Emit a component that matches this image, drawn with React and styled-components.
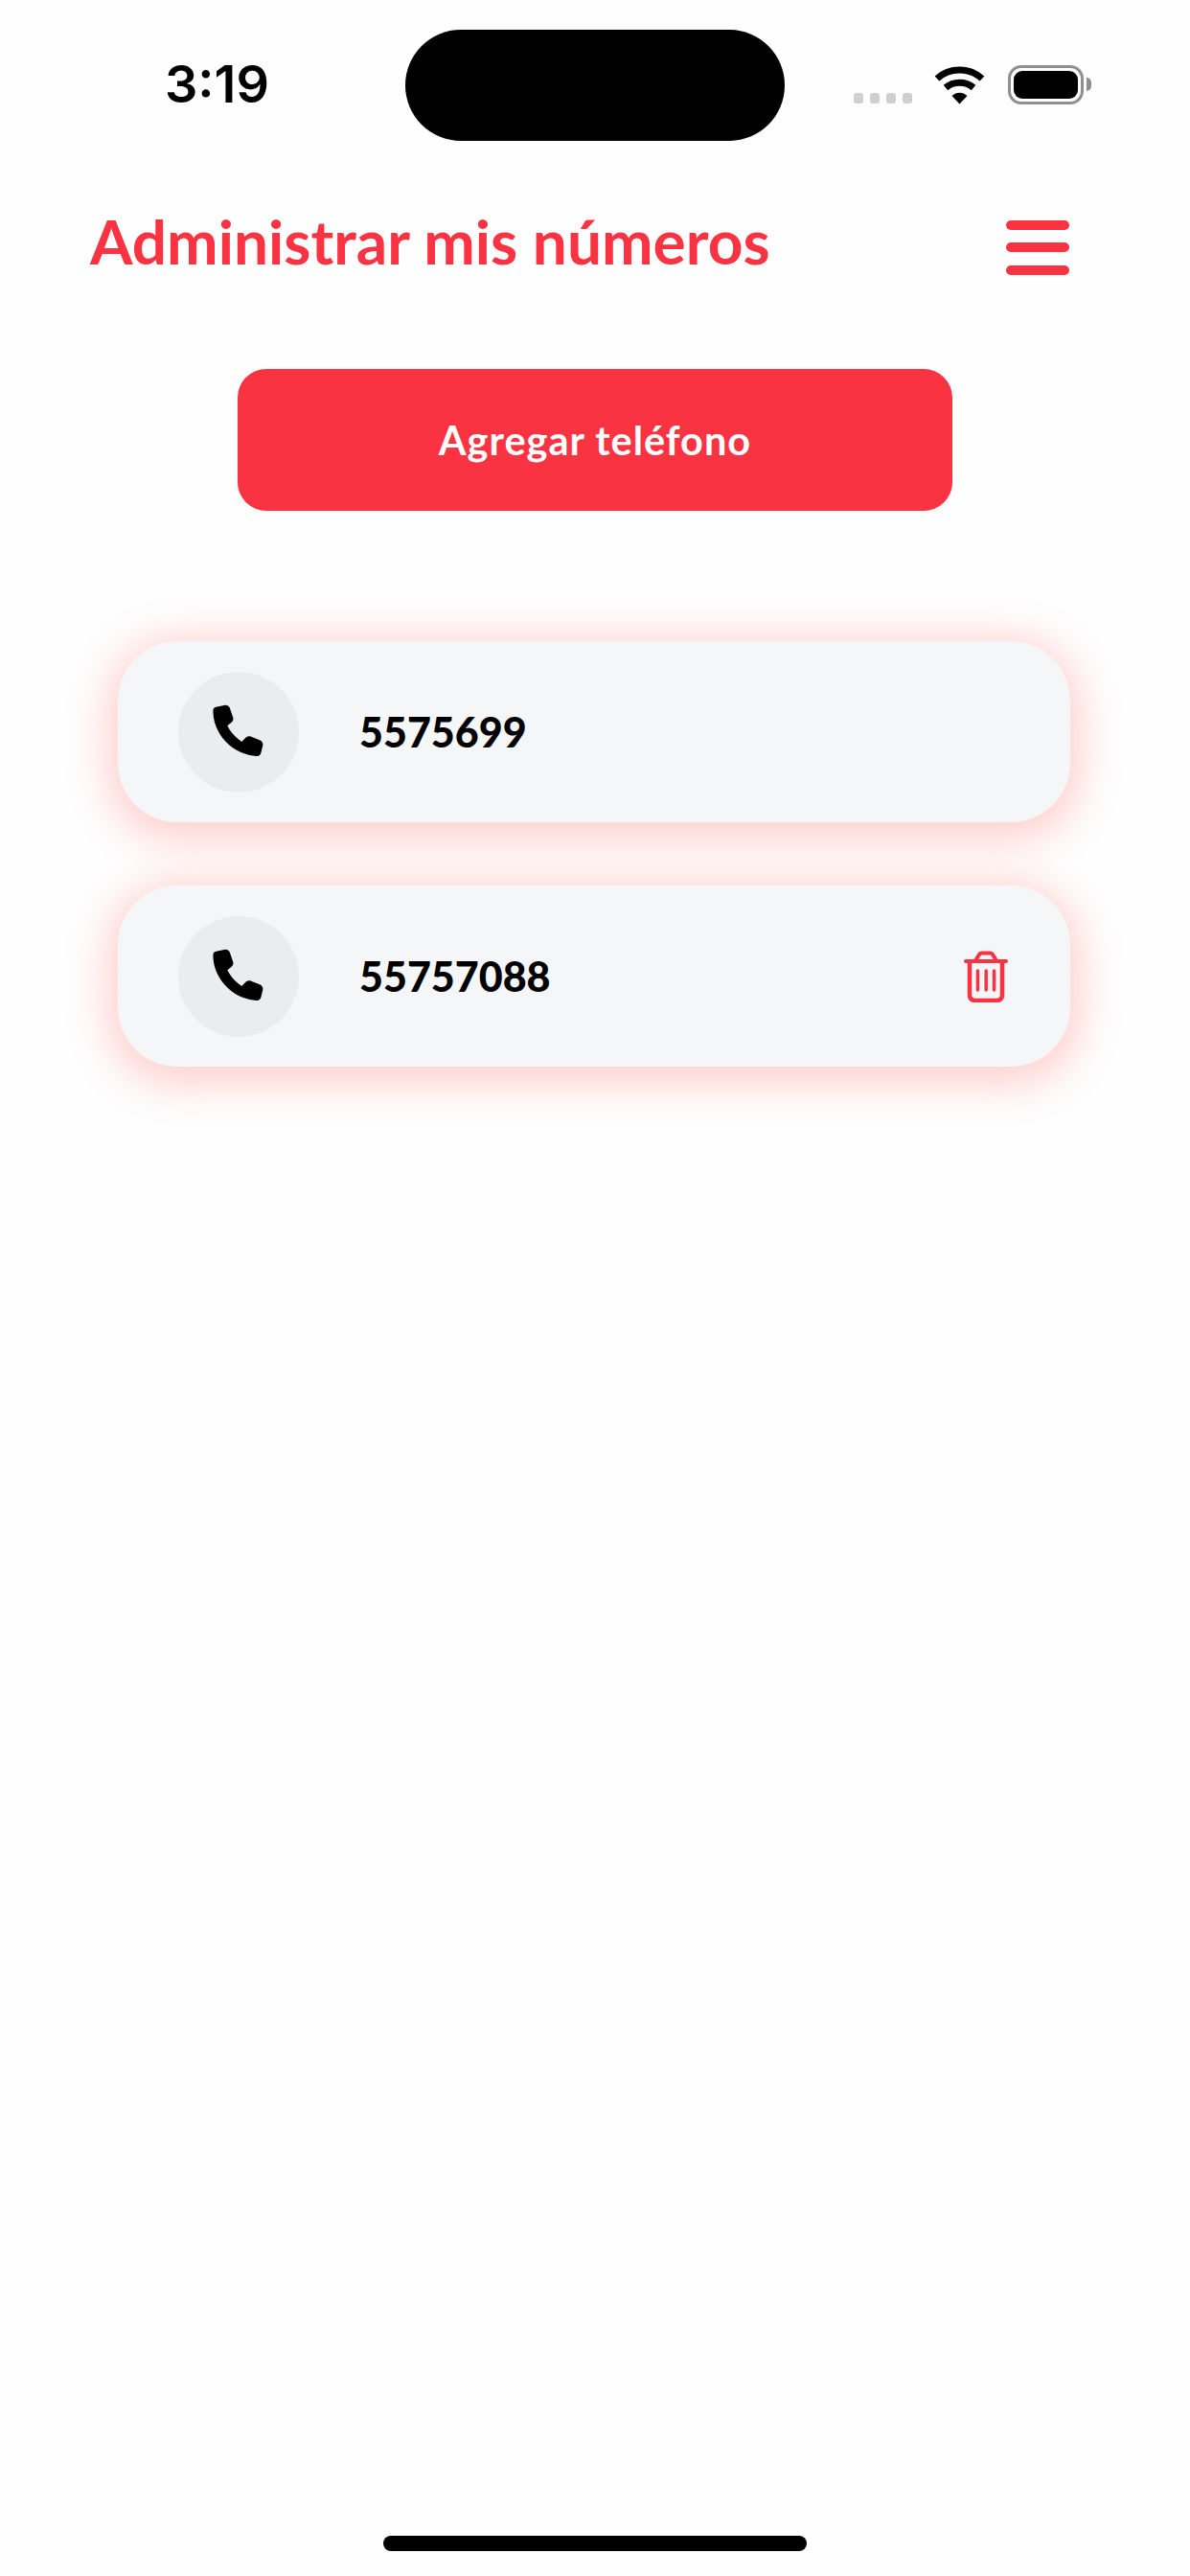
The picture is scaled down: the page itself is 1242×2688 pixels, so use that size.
import React from 'react';
import styled, { createGlobalStyle } from 'styled-components';

const RED = '#fa3342';

const numbers = [
  { id: 1, value: '5575699', removable: false },
  { id: 2, value: '55757088', removable: true },
];

const GlobalStyle = createGlobalStyle`
  html, body {
    margin: 0;
    padding: 0;
    background: #fefefe;
  }
`;

const Page = styled.div`
  width: 1242px;
  height: 2688px;
  display: flex;
  flex-direction: column;
  background: #fefefe;
  font-family: Lato, "Noto Sans", sans-serif;
  overflow: hidden;
`;

const StatusBar = styled.div`
  height: 116px;
  margin-top: 31px;
  padding: 0 104px 0 172px;
  display: flex;
  flex-shrink: 0;
`;

const Time = styled.div`
  width: 251px;
  margin-top: 26px;
  font-family: Inter, "Liberation Sans", sans-serif;
  font-size: 54px;
  line-height: 62px;
  font-weight: 600;
  color: #000;
`;

const Island = styled.div`
  width: 396px;
  height: 116px;
  border-radius: 58px;
  background: #000;
`;

const StatusIcons = styled.div`
  width: 247px;
  height: 41px;
  margin-top: 37px;
  margin-left: auto;
  display: flex;
  align-items: flex-end;
`;

const SignalDots = styled.div`
  display: flex;
  gap: 7px;
  margin-bottom: 1px;
  margin-right: 23px;
`;

const SignalDot = styled.span`
  width: 10px;
  height: 11px;
  border-radius: 3px;
  background: #cfcfcf;
`;

const Wifi = styled.svg`
  width: 53px;
  height: 41px;
  margin-right: 24px;
`;

const Battery = styled.div`
  width: 79px;
  height: 41px;
  box-sizing: border-box;
  border: 3px solid #8f8f8f;
  border-radius: 14px;
  padding: 3px;
  position: relative;
`;

const BatteryFill = styled.div`
  height: 100%;
  border-radius: 9px;
  background: #000;
`;

const BatteryCap = styled.span`
  position: absolute;
  right: -11px;
  top: 10px;
  width: 5px;
  height: 14px;
  border-radius: 0 7px 7px 0;
  background: #8f8f8f;
`;

const Header = styled.header`
  margin-top: 76px;
  padding: 0 126px 0 94px;
  height: 70px;
  display: flex;
  align-items: center;
  justify-content: space-between;
  flex-shrink: 0;
`;

const Title = styled.h1`
  margin: 0 0 12px;
  font-size: 64px;
  line-height: 70px;
  font-weight: 700;
  color: ${RED};
`;

const MenuButton = styled.button`
  width: 66px;
  padding: 0;
  border: 0;
  background: none;
  display: flex;
  flex-direction: column;
  gap: 13.5px;
`;

const MenuBar = styled.span`
  height: 10px;
  border-radius: 5px;
  background: ${RED};
`;

const AddButton = styled.button`
  align-self: center;
  width: 746px;
  height: 148px;
  margin-top: 92px;
  border: 0;
  border-radius: 30px;
  background: ${RED};
  color: #fff;
  font-family: Lato, "Noto Sans", sans-serif;
  font-size: 41.5px;
  font-weight: 700;
  letter-spacing: 1px;
  flex-shrink: 0;
`;

const List = styled.div`
  margin-top: 136px;
  padding: 0 125px 0 123px;
  display: flex;
  flex-direction: column;
  gap: 66px;
`;

const Card = styled.div`
  height: 189px;
  box-sizing: border-box;
  padding: 0 65px 0 63px;
  display: flex;
  align-items: center;
  border-radius: 62px;
  background: #f5f6f8;
  box-shadow: 0 8px 40px 12px rgba(255, 100, 90, 0.28);
`;

const PhoneCircle = styled.div`
  width: 126px;
  height: 126px;
  border-radius: 50%;
  background: #ebecef;
  display: flex;
  align-items: center;
  justify-content: center;
  flex-shrink: 0;
`;

const PhoneNumber = styled.div`
  margin-left: 63px;
  flex: 1;
  font-size: 43px;
  font-weight: 900;
  color: #000;
`;

const DeleteButton = styled.button`
  padding: 0;
  border: 0;
  background: none;
  display: flex;
`;

const HomeIndicator = styled.div`
  align-self: center;
  width: 442px;
  height: 16px;
  margin-top: auto;
  margin-bottom: 26px;
  border-radius: 8px;
  background: #000;
  flex-shrink: 0;
`;

const WifiIcon = () => (
  <Wifi viewBox="0 0 53 41" fill="none">
    <path d="M3 14 C16 2 37 2 50 14" stroke="#000" strokeWidth="7" />
    <path d="M12 23.5 C20 16.5 33 16.5 41 23.5" stroke="#000" strokeWidth="7" />
    <path d="M18.5 32 C23 27.5 30 27.5 34.500 32 L26.500 40.500 Z" fill="#000" />
  </Wifi>
);

const PhoneIcon = () => (
  <svg width="100" height="90" viewBox="0 0 300 270" fill="#000">
    <path d="M70 68 Q70 58 80 56 L108 50 Q118 49 122 58 L133 90 Q135 98 128 104 L115 115 Q130 145 160 165 L172 152 Q178 146 186 148 L216 160 Q227 165 226 176 L220 200 Q217 210 205 210 C130 205 70 140 70 68 Z" />
  </svg>
);

const TrashIcon = () => (
  <svg width="46" height="54" viewBox="0 0 46 54" fill="none" stroke={RED} strokeLinecap="round" strokeLinejoin="round">
    <path d="M2 11 H44" strokeWidth="4" />
    <path d="M12 10.500 L16 4 C16.500 3 17.500 2.500 18.500 2.500 H27.500 C28.500 2.500 29.500 3 30 4 L34 10.500" strokeWidth="4" />
    <path d="M6 12 V46 C6 50 8 52 12 52 H34 C38 52 40 50 40 46 V12" strokeWidth="4.500" />
    <path d="M14.500 21 V41 M23.200 21 V41 M31.500 21 V41" strokeWidth="3.500" />
  </svg>
);

export default function App() {
  return (
    <Page>
      <GlobalStyle />
      <StatusBar>
        <Time>3:19</Time>
        <Island />
        <StatusIcons>
          <SignalDots>
            <SignalDot />
            <SignalDot />
            <SignalDot />
            <SignalDot />
          </SignalDots>
          <WifiIcon />
          <Battery>
            <BatteryFill />
            <BatteryCap />
          </Battery>
        </StatusIcons>
      </StatusBar>

      <Header>
        <Title>Administrar mis números</Title>
        <MenuButton>
          <MenuBar />
          <MenuBar />
          <MenuBar />
        </MenuButton>
      </Header>

      <AddButton>Agregar teléfono</AddButton>

      <List>
        {numbers.map((n) => (
          <Card key={n.id}>
            <PhoneCircle>
              <PhoneIcon />
            </PhoneCircle>
            <PhoneNumber>{n.value}</PhoneNumber>
            {n.removable && (
              <DeleteButton>
                <TrashIcon />
              </DeleteButton>
            )}
          </Card>
        ))}
      </List>

      <HomeIndicator />
    </Page>
  );
}
